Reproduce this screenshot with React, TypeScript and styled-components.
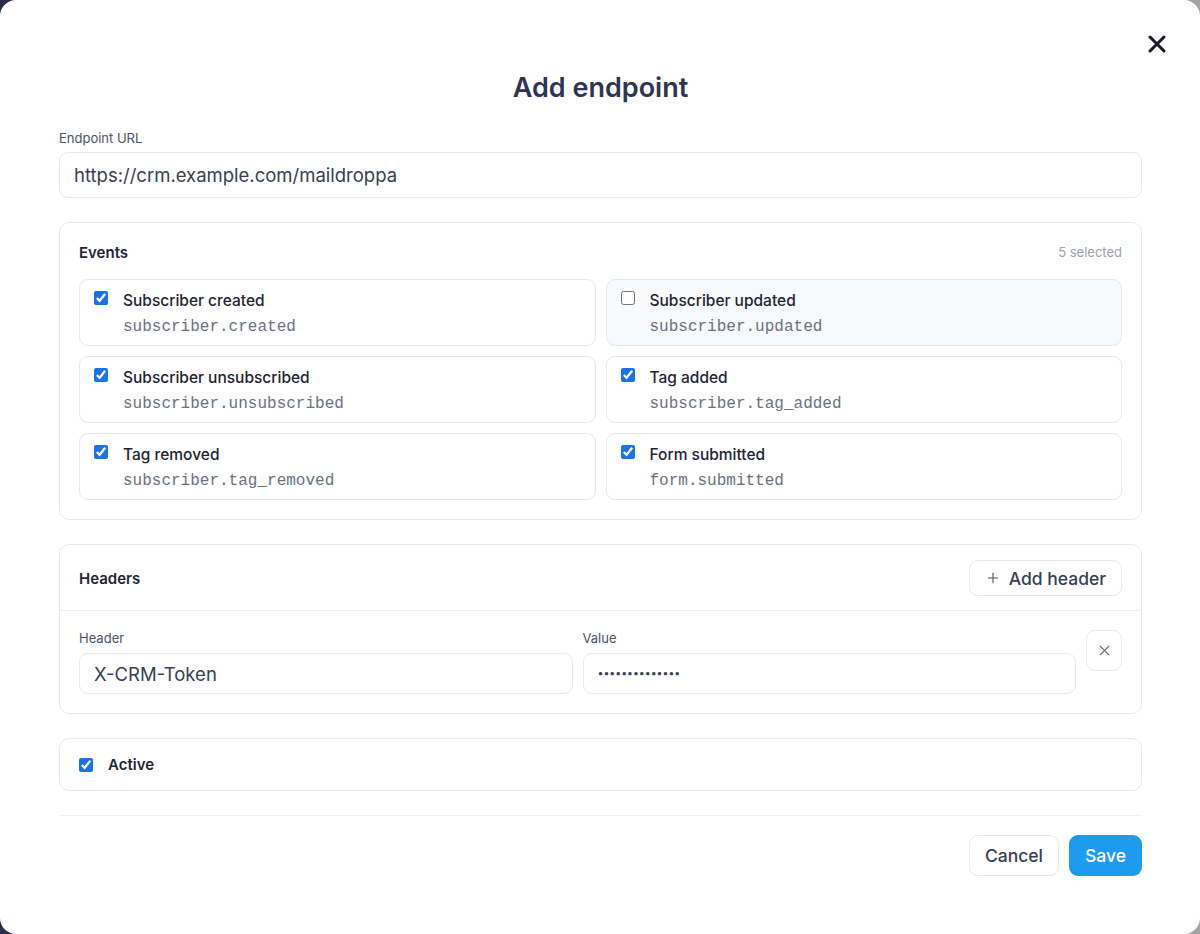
import styled, { createGlobalStyle } from 'styled-components';
import { X, Plus } from 'lucide-react';

const GlobalStyle = createGlobalStyle`
  html, body {
    margin: 0;
    padding: 0;
  }

  body {
    font-family: Inter, 'Noto Sans', sans-serif;
    background: linear-gradient(90deg, #2b2c4d 0%, #6d6d80 50%, #a3a3a3 100%);
  }

  * {
    box-sizing: border-box;
  }
`;

const Modal = styled.div`
  position: relative;
  width: 1200px;
  height: 934px;
  background: #fff;
  border-radius: 16px;
  padding: 71px 58px 0 59px;
`;

const CloseButton = styled.button`
  position: absolute;
  top: 30px;
  right: 29px;
  width: 28px;
  height: 28px;
  border: 0;
  padding: 0;
  background: none;
  color: #161b2e;
  display: flex;
  align-items: center;
  justify-content: center;
`;

const Title = styled.h2`
  margin: 0 0 25px;
  text-align: center;
  font-size: 27px;
  line-height: 34px;
  font-weight: 600;
  color: #2f3452;
`;

const FieldLabel = styled.label<{ $gap?: number }>`
  display: block;
  font-size: 13px;
  line-height: 16px;
  color: #4b5563;
  margin-bottom: ${p => p.$gap ?? 6}px;
`;

const TextInput = styled.div<{ $height?: number; $size?: number }>`
  height: ${p => p.$height ?? 46}px;
  border: 1px solid #e6e8ec;
  border-radius: 9px;
  padding: 0 14px;
  display: flex;
  align-items: center;
  font-size: ${p => p.$size ?? 18.5}px;
  color: #374151;
  background: #fff;
`;

const Card = styled.section`
  border: 1px solid #e6e8ec;
  border-radius: 10px;
  margin-top: 24px;
`;

const EventsCard = styled(Card)`
  padding: 19px;
`;

const CardHead = styled.div`
  display: flex;
  align-items: center;
  justify-content: space-between;
  height: 20px;
  margin-bottom: 17px;
`;

const CardTitle = styled.div`
  font-size: 15px;
  font-weight: 600;
  color: #1f2433;
`;

const Muted = styled.div`
  font-size: 13px;
  color: #9ca3af;
`;

const EventGrid = styled.div`
  display: grid;
  grid-template-columns: 1fr 1fr;
  gap: 10px;
`;

const EventItem = styled.label<{ $off?: boolean }>`
  display: flex;
  gap: 15px;
  align-items: flex-start;
  border: 1px solid #e6e8ec;
  border-radius: 9px;
  padding: 11px 14px 8px;
  background: ${p => (p.$off ? '#f8f9fb' : '#fff')};
`;

const Check = styled.input.attrs({ type: 'checkbox' })`
  width: 14px;
  height: 14px;
  margin: 0;
  accent-color: #1a73e8;
  flex: none;
`;

const EventTitle = styled.div`
  font-size: 15.5px;
  line-height: 20px;
  font-weight: 500;
  color: #1f2433;
`;

const EventCode = styled.div`
  margin-top: 7px;
  font-family: 'Liberation Mono', monospace;
  font-size: 16px;
  line-height: 19px;
  color: #6b7280;
`;

const HeadersTop = styled.div`
  display: flex;
  align-items: center;
  justify-content: space-between;
  padding: 15px 19px 14px;
  border-bottom: 1px solid #eef0f3;
`;

const GhostButton = styled.button<{ $h?: number }>`
  height: ${p => p.$h ?? 41}px;
  border: 1px solid #e6e8ec;
  border-radius: 9px;
  background: #fff;
  padding: 0 15px;
  display: flex;
  align-items: center;
  gap: 8px;
  font-family: inherit;
  font-size: 17.5px;
  font-weight: 500;
  color: #374151;
`;

const HeaderRow = styled.div`
  display: grid;
  grid-template-columns: 1fr 1fr 36px;
  column-gap: 10px;
  align-items: start;
  padding: 19px;
`;

const IconButton = styled.button`
  width: 36px;
  height: 41px;
  border: 1px solid #e6e8ec;
  border-radius: 9px;
  background: #fff;
  display: flex;
  align-items: center;
  justify-content: center;
  color: #6b7280;
  padding: 0;
`;

const ActiveCard = styled(Card)`
  height: 53px;
  display: flex;
  align-items: center;
  gap: 15px;
  padding: 0 19px;
`;

const Divider = styled.hr`
  border: 0;
  border-top: 1px solid #eef0f3;
  margin: 24px 0 19px;
`;

const Footer = styled.div`
  display: flex;
  justify-content: flex-end;
  gap: 10px;
`;

const PrimaryButton = styled.button`
  height: 41px;
  border: 0;
  border-radius: 9px;
  background: #1d9bf0;
  color: #fff;
  padding: 0 16px;
  font-family: inherit;
  font-size: 17.5px;
  font-weight: 500;
`;

const events = [
  { title: 'Subscriber created', code: 'subscriber.created', on: true },
  { title: 'Subscriber updated', code: 'subscriber.updated', on: false },
  { title: 'Subscriber unsubscribed', code: 'subscriber.unsubscribed', on: true },
  { title: 'Tag added', code: 'subscriber.tag_added', on: true },
  { title: 'Tag removed', code: 'subscriber.tag_removed', on: true },
  { title: 'Form submitted', code: 'form.submitted', on: true },
];

export default function App() {
  return (
    <>
      <GlobalStyle />
      <Modal>
        <CloseButton aria-label="Close">
          <X size={28} strokeWidth={2.6} />
        </CloseButton>
        <Title>Add endpoint</Title>

        <FieldLabel>Endpoint URL</FieldLabel>
        <TextInput>https://crm.example.com/maildroppa</TextInput>

        <EventsCard>
          <CardHead>
            <CardTitle>Events</CardTitle>
            <Muted>5 selected</Muted>
          </CardHead>
          <EventGrid>
            {events.map(ev => (
              <EventItem key={ev.code} $off={!ev.on}>
                <Check defaultChecked={ev.on} />
                <div>
                  <EventTitle>{ev.title}</EventTitle>
                  <EventCode>{ev.code}</EventCode>
                </div>
              </EventItem>
            ))}
          </EventGrid>
        </EventsCard>

        <Card>
          <HeadersTop>
            <CardTitle>Headers</CardTitle>
            <GhostButton $h={36}>
              <Plus size={16} strokeWidth={1.6} color="#4b5563" />
              Add header
            </GhostButton>
          </HeadersTop>
          <HeaderRow>
            <div>
              <FieldLabel $gap={7}>Header</FieldLabel>
              <TextInput $height={41}>X-CRM-Token</TextInput>
            </div>
            <div>
              <FieldLabel $gap={7}>Value</FieldLabel>
              <TextInput $height={41} $size={10.5}>••••••••••••••</TextInput>
            </div>
            <IconButton aria-label="Remove header">
              <X size={17} strokeWidth={1.5} />
            </IconButton>
          </HeaderRow>
        </Card>

        <ActiveCard>
          <Check defaultChecked />
          <CardTitle>Active</CardTitle>
        </ActiveCard>

        <Divider />

        <Footer>
          <GhostButton>Cancel</GhostButton>
          <PrimaryButton>Save</PrimaryButton>
        </Footer>
      </Modal>
    </>
  );
}
